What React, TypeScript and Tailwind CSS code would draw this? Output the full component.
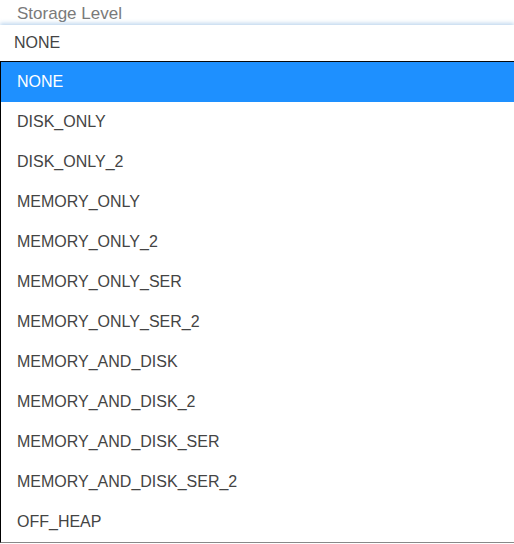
import React from "react";

const items = [
  "NONE",
  "DISK_ONLY",
  "DISK_ONLY_2",
  "MEMORY_ONLY",
  "MEMORY_ONLY_2",
  "MEMORY_ONLY_SER",
  "MEMORY_ONLY_SER_2",
  "MEMORY_AND_DISK",
  "MEMORY_AND_DISK_2",
  "MEMORY_AND_DISK_SER",
  "MEMORY_AND_DISK_SER_2",
  "OFF_HEAP",
];

export default function App() {
  return (
    <div className="w-[514px] h-[544px] overflow-hidden bg-white font-['Liberation_Sans',Arial,sans-serif] flex flex-col">
      <div className="h-[23px] mt-[2px] shrink-0 pl-[17px] text-[17px] leading-[23px] text-[#7a7a7a]">Storage Level</div>
      <div className="h-[36px] shrink-0 pl-[14px] flex items-center text-[16px] text-[#444] shadow-[0_-2px_4px_rgba(120,170,220,0.45)] bg-white relative z-10">
        NONE
      </div>
      <div className="border-t border-l border-black border-b border-b-[#888] flex flex-col shrink-0">
        {items.map((it, i) => (
          <div
            key={it}
            className={
              i === 0
                ? "h-[40px] flex items-center pl-[16px] text-[16px] bg-[#1e90ff] text-white"
                : "h-[40px] flex items-center pl-[16px] text-[16px] text-[#444]"
            }
          >
            {it}
          </div>
        ))}
      </div>
    </div>
  );
}
